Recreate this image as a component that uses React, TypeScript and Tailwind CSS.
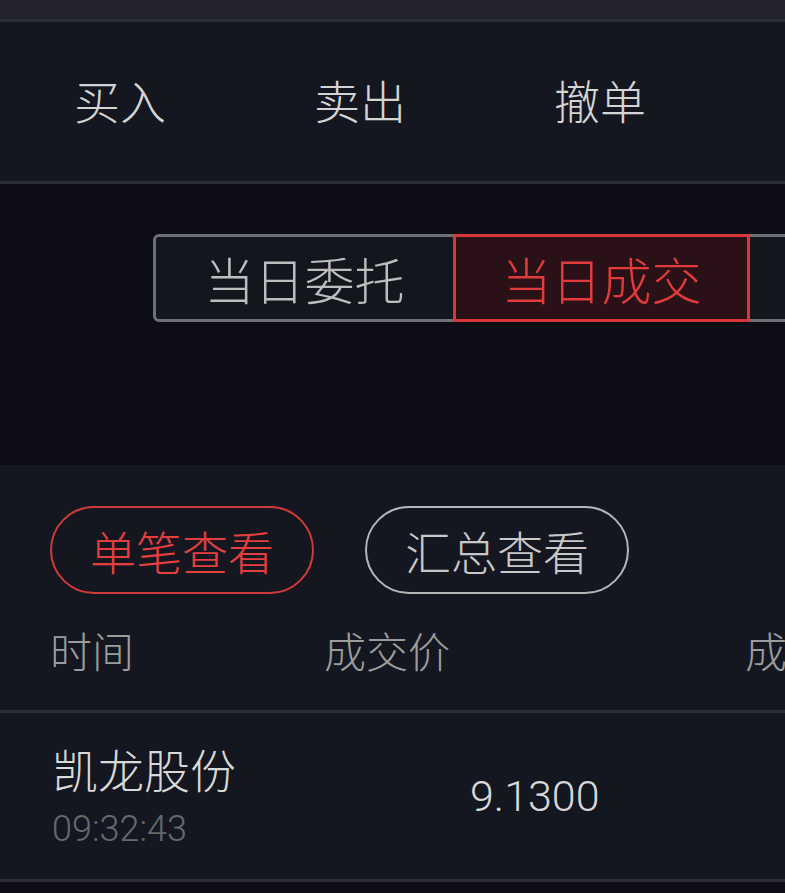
import React, { useState } from 'react';

const CJK = "font-['Noto_Sans_CJK_SC','Noto_Sans',sans-serif]";
const NUM = "font-['Roboto','Noto_Sans',sans-serif]";

const navTabs = ['买入', '卖出', '撤单', '持仓'];
const segments = ['当日委托', '当日成交', '历史成交'];

const App: React.FC = () => {
  const [seg, setSeg] = useState(1);
  const [mode, setMode] = useState(0);

  return (
    <div className={`w-[785px] h-[893px] overflow-hidden bg-[#0c0d15] font-light ${CJK}`}>
      {/* status strip */}
      <div className="h-[19px] bg-[#22232b]" />

      {/* top tabs */}
      <nav className="flex h-[165px] bg-[#151720] border-y-[3px] border-[#2c2d36]">
        {navTabs.map((t) => (
          <button
            key={t}
            className="w-[240px] shrink-0 flex items-center justify-center pb-[6px] text-[46px] leading-none text-[#d4d4d4]"
          >
            {t}
          </button>
        ))}
      </nav>

      {/* segmented control */}
      <div className="h-[281px] pt-[50px] pl-[153px]">
        <div className="flex w-[900px] h-[88px] rounded-[6px] border-[3px] border-[#6f7074] bg-[#14161e]">
          {segments.map((s, i) => (
            <button
              key={s}
              onClick={() => setSeg(i)}
              className={`w-[297px] shrink-0 flex items-center justify-center text-[50px] leading-none ${
                seg === i
                  ? 'border-[3px] border-[#d8363a] bg-[#2a1017] text-[#e23b3b] -my-[3px]'
                  : 'text-[#bdbdbd]'
              }`}
            >
              {s}
            </button>
          ))}
        </div>
      </div>

      {/* list section */}
      <section className="bg-[#141720]">
        <div className="pl-[50px] pt-[41px]">
          <div className="flex gap-[51px]">
            {['单笔查看', '汇总查看'].map((p, i) => (
              <button
                key={p}
                onClick={() => setMode(i)}
                className={`w-[264px] h-[88px] rounded-full border-2 flex items-center justify-center text-[46px] leading-none ${
                  mode === i ? 'border-[#cf3a3a] text-[#e53e3e]' : 'border-[#b5b5b5] text-[#c8c8c8]'
                }`}
              >
                {p}
              </button>
            ))}
          </div>

          <div className="flex items-center h-[116px] pb-[4px] text-[42px] leading-none text-[#9c9c9c] whitespace-nowrap">
            <div className="w-[274px] shrink-0">时间</div>
            <div className="w-[421px] shrink-0">成交价</div>
            <div className="shrink-0">成交量</div>
          </div>
        </div>

        <div className="h-[3px] bg-[#2c2d36]" />

        <div className="flex items-center h-[166px] pl-[52px] whitespace-nowrap">
          <div className="w-[418px] shrink-0 flex flex-col">
            <span className="text-[46px] leading-none text-[#d9d9d9]">凯龙股份</span>
            <span className={`${NUM} text-[36px] leading-none mt-[20px] text-[#66686e]`}>09:32:43</span>
          </div>
          <div className={`${NUM} w-[313px] shrink-0 text-[43px] leading-none text-[#d9d9d9]`}>9.1300</div>
          <div className={`${NUM} shrink-0 text-[43px] leading-none text-[#d9d9d9]`}>1000</div>
        </div>

        <div className="h-[3px] bg-[#2c2d36]" />
      </section>
    </div>
  );
};

export default App;
